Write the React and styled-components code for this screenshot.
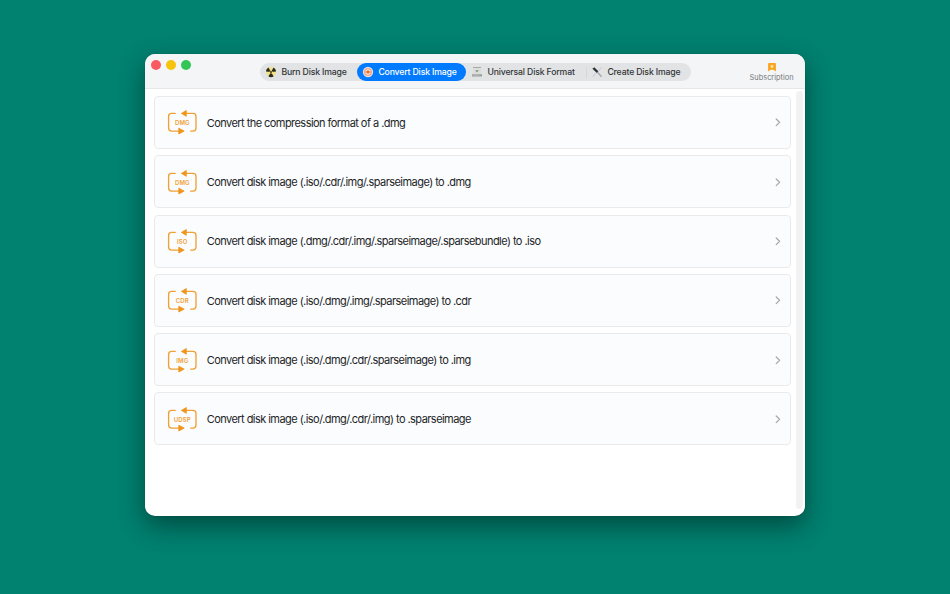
import React from "react";
import styled, { createGlobalStyle } from "styled-components";

const formats = [
  { tag: "DMG", text: "Convert the compression format of a .dmg" },
  { tag: "DMG", text: "Convert disk image (.iso/.cdr/.img/.sparseimage) to .dmg" },
  {
    tag: "ISO",
    text: "Convert disk image (.dmg/.cdr/.img/.sparseimage/.sparsebundle) to .iso",
  },
  { tag: "CDR", text: "Convert disk image (.iso/.dmg/.img/.sparseimage) to .cdr" },
  { tag: "IMG", text: "Convert disk image (.iso/.dmg/.cdr/.sparseimage) to .img" },
  { tag: "UDSP", text: "Convert disk image (.iso/.dmg/.cdr/.img) to .sparseimage" },
];

const BurnIcon = () => (
  <svg width="12" height="12" viewBox="0 0 12 12">
    <circle cx="6" cy="6" r="5.1" fill="#f1e18a" />
    <path d="M6 6 .9 5.6A5.2 5.2 0 0 1 3.4 1.5Z" fill="#29291f" />
    <path d="M6 6 11.1 5.6A5.2 5.2 0 0 0 8.6 1.5Z" fill="#29291f" />
    <path d="M6 6 3.4 10.5A5.2 5.2 0 0 0 8.6 10.5Z" fill="#29291f" />
    <circle cx="6" cy="6" r="1.5" fill="#f3df63" />
    <circle cx="6" cy="6" r="0.9" fill="#29291f" />
  </svg>
);

const ConvertIcon = () => (
  <svg width="12" height="12" viewBox="0 0 12 12">
    <circle cx="6" cy="6" r="5.2" fill="#e6dcdd" />
    <circle cx="6" cy="6" r="3.3" fill="#fff5ed" stroke="#eb9a72" strokeWidth="1.1" />
    <circle cx="6" cy="6" r="1.7" fill="#ea6d32" />
    <path d="M3 6h6" stroke="#ea6d32" strokeWidth="0.7" />
  </svg>
);

const DriveIcon = () => (
  <svg width="12" height="12" viewBox="0 0 12 12">
    <path d="M2.2 1.5h7.6l1 6.5H1.2Z" fill="#dedfdb" />
    <path d="M2 1.5h8" stroke="#969996" strokeWidth="0.8" />
    <path d="M4.2 4.3h3.6L6 6.4Z" fill="#7d8f80" />
    <rect x="1" y="8.2" width="10" height="2.2" rx="0.5" fill="#999c9c" />
    <path d="M1.8 9.2h6.8" stroke="#d4d6d6" strokeWidth="0.5" />
  </svg>
);

const ToolsIcon = () => (
  <svg width="12" height="12" viewBox="0 0 12 12">
    <path d="M10.2 1.8 2 10.4" stroke="#cfd2d5" strokeWidth="1.2" strokeLinecap="round" />
    <path d="m5.2 5 5 5.2" stroke="#a3a7aa" strokeWidth="1.3" strokeLinecap="round" />
    <path d="m1.4 2.8 1.9-1.5 4 3.9-1.6 1.5Z" fill="#303336" />
  </svg>
);

const RibbonIcon = () => (
  <svg width="10" height="10" viewBox="0 0 10 10">
    <path d="M1.9 1h6.2q.8 0 .8.8v7.8L7 8.2 5 7.4 3 8.2 1.1 9.6V1.8Q1.1 1 1.9 1Z" fill="#faa51d" />
    <path
      d="m5 2.4.6 1.2 1.4.2-1 1 .2 1.4L5 5.5l-1.2.7.2-1.4-1-1 1.4-.2Z"
      fill="#ffe6b8"
    />
  </svg>
);

const FormatIcon = ({ tag }) => (
  <svg width="30" height="26" viewBox="0 0 30 26">
    <g fill="none" stroke="#f0a135" strokeWidth="1.35" strokeLinecap="round">
      <path d="M8.2 4.4H4.6q-3 0-3 3v11.7q0 3 3 3H12" />
      <path d="M19 4.4h7q3 0 3 3v11.7q0 3-3 3h-2.4" />
    </g>
    <path
      d="M14.4 4.4 19.3 1.5v5.8ZM17.2 22.1 11.8 19.2v5.8Z"
      fill="#ef951b"
      stroke="#ef951b"
      strokeWidth="0.8"
      strokeLinejoin="round"
    />
    <TagText x="15.3" y="15.6" textAnchor="middle">
      {tag}
    </TagText>
  </svg>
);

const Chevron = () => (
  <svg width="6" height="10" viewBox="0 0 6 10">
    <path
      d="M1.2 2 4.6 5.3 1.2 8.6"
      fill="none"
      stroke="#a6a8ab"
      strokeWidth="1.2"
      strokeLinecap="round"
      strokeLinejoin="round"
    />
  </svg>
);

const tabs = [
  { label: "Burn Disk Image", icon: <BurnIcon />, width: 97 },
  { label: "Convert Disk Image", icon: <ConvertIcon />, width: 109, active: true },
  { label: "Universal Disk Format", icon: <DriveIcon />, width: 120 },
  { label: "Create Disk Image", icon: <ToolsIcon />, width: 105, divided: true },
];

const App = () => {
  return (
    <Desktop>
      <GlobalStyle />
      <Window>
        <Toolbar>
          <Lights>
            <Light $color="#fb5b60" />
            <Light $color="#f8c30c" />
            <Light $color="#33c657" />
          </Lights>
          <Segmented>
            {tabs.map((tab) => (
              <Tab
                key={tab.label}
                $width={tab.width}
                $active={tab.active}
                $divided={tab.divided}
              >
                {tab.icon}
                <TabLabel>{tab.label}</TabLabel>
              </Tab>
            ))}
          </Segmented>
          <Subscription>
            <RibbonIcon />
            <span>Subscription</span>
          </Subscription>
        </Toolbar>
        <Content>
          <List>
            {formats.map((item) => (
              <Row key={item.text}>
                <FormatIcon tag={item.tag} />
                <RowText>{item.text}</RowText>
                <Chevron />
              </Row>
            ))}
          </List>
          <ScrollTrack />
        </Content>
      </Window>
    </Desktop>
  );
};

const GlobalStyle = createGlobalStyle`
  * {
    box-sizing: border-box;
  }

  body {
    margin: 0;
    overflow: hidden;
    font-family: Inter, "Liberation Sans", sans-serif;
  }

  svg {
    display: block;
    flex: none;
  }
`;

const Desktop = styled.div`
  height: 594px;
  padding: 54.4px 0 0 145.4px;
  background: #018170;
`;

const Window = styled.div`
  display: flex;
  flex-direction: column;
  width: 659.4px;
  height: 461.6px;
  border-radius: 10px;
  overflow: hidden;
  background: #ffffff;
  box-shadow: 0 0 1px rgba(0, 0, 0, 0.35), 0 10px 26px rgba(0, 0, 0, 0.42);
`;

const Toolbar = styled.div`
  display: flex;
  flex: none;
  height: 34.6px;
  background: #f3f5f7;
  border-bottom: 1px solid #e5e7e9;
`;

const Lights = styled.div`
  display: flex;
  gap: 5.2px;
  width: 114.4px;
  padding: 5.6px 0 0 5.6px;
`;

const Light = styled.div`
  width: 10px;
  height: 10px;
  border-radius: 50%;
  background: ${(props) => props.$color};
`;

const Segmented = styled.div`
  display: flex;
  height: 18.5px;
  margin-top: 8.2px;
  border-radius: 10px;
  background: #e1e3e5;
`;

const Tab = styled.div`
  position: relative;
  display: flex;
  align-items: center;
  gap: 4.8px;
  width: ${(props) => props.$width}px;
  padding-left: 4.8px;
  border-radius: 10px;
  background: ${(props) => (props.$active ? "#007aff" : "transparent")};
  color: ${(props) => (props.$active ? "#ffffff" : "#333537")};
  font-size: 8.7px;
  font-weight: 500;
  letter-spacing: -0.16px;
  white-space: nowrap;

  &::before {
    content: "";
    display: ${(props) => (props.$divided ? "block" : "none")};
    position: absolute;
    left: 0;
    top: 4px;
    width: 1px;
    height: 11px;
    background: #d5d7d9;
  }
`;

const TabLabel = styled.span`
  padding-top: 1px;
`;

const Subscription = styled.div`
  display: flex;
  flex-direction: column;
  align-items: center;
  gap: 1px;
  margin-left: auto;
  padding: 7.4px 11.2px 0 0;
  color: #77797b;
  font-size: 7.4px;
  line-height: 10px;
`;

const Content = styled.div`
  display: flex;
  flex: 1;
  justify-content: space-between;
  padding: 2px 1.5px 7px 9px;
`;

const List = styled.div`
  display: flex;
  flex-direction: column;
  gap: 6.28px;
  width: 636.4px;
  padding-top: 5px;
`;

const Row = styled.div`
  display: flex;
  flex: none;
  align-items: center;
  height: 53px;
  padding: 0 8.4px 0 12px;
  border: 1px solid #e8eaec;
  border-radius: 4px;
  background: #fbfcfe;
`;

const RowText = styled.div`
  flex: 1;
  margin-left: 9.3px;
  padding-top: 0.6px;
  color: #222426;
  font-size: 11px;
  letter-spacing: -0.55px;
  white-space: nowrap;
`;

const TagText = styled.text`
  fill: #f0a135;
  font-size: 6px;
  font-weight: 600;
  letter-spacing: 0.1px;
`;

const ScrollTrack = styled.div`
  width: 7.5px;
  border-radius: 4px;
  background: #f2f2f3;
`;

export default App;
